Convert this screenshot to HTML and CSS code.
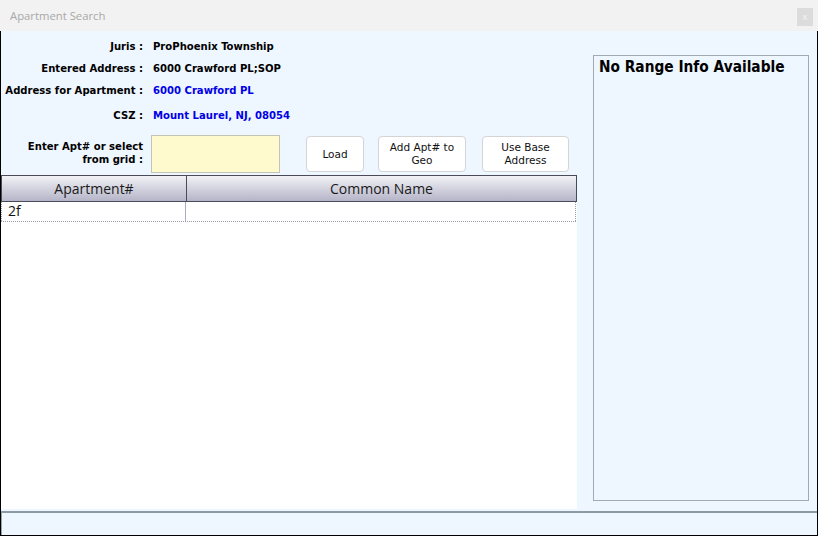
FILE: index.html
```html
<!DOCTYPE html>
<html>
<head>
<meta charset="utf-8">
<link rel="stylesheet" href="styles.css">
</head>
<body>
<div class="titlebar">
  <span class="title">Apartment Search</span>
  <span class="close">x</span>
</div>
<div class="window">
  <div class="main">
    <div class="left">
      <div class="form">
        <div class="row r1"><span class="lbl">Juris :</span><span class="val">ProPhoenix Township</span></div>
        <div class="row"><span class="lbl">Entered Address :</span><span class="val">6000 Crawford PL;SOP</span></div>
        <div class="row"><span class="lbl">Address for Apartment :</span><span class="val blue">6000 Crawford PL</span></div>
        <div class="row r4"><span class="lbl">CSZ :</span><span class="val blue">Mount Laurel, NJ, 08054</span></div>
        <div class="row r5">
          <span class="lbl two">Enter Apt# or select<br>from grid :</span>
          <input class="apt" type="text">
          <button class="btn b-load">Load</button>
          <button class="btn b-add">Add Apt# to<br>Geo</button>
          <button class="btn b-use">Use Base<br>Address</button>
        </div>
      </div>
      <div class="grid">
        <div class="ghead">
          <div class="c1">Apartment#</div>
          <div class="c2">Common Name</div>
        </div>
        <div class="grow">
          <div class="c1">2f</div>
          <div class="c2"></div>
        </div>
      </div>
    </div>
    <div class="right">
      <div class="panel">
        <div class="ptitle">No Range Info Available</div>
      </div>
    </div>
  </div>
  <div class="status"></div>
</div>
</body>
</html>
```

FILE: styles.css
```css
* { box-sizing: border-box; }
html, body { margin: 0; padding: 0; }
body { width: 818px; height: 536px; background: #eef6ff; font-family: "DejaVu Sans Condensed", "Liberation Sans", sans-serif; overflow: hidden; }

.titlebar { height: 31px; background: #f2f2f2; display: flex; align-items: center; justify-content: space-between; padding: 0 5px 0 10px; }
.title { font-family: "Open Sans", "Noto Sans", sans-serif; font-size: 11.3px; color: #a8a8a8; }
.close { width: 16px; height: 18px; background: #dcdcdc; color: #f4f4f4; font-size: 9px; display: flex; align-items: center; justify-content: center; margin-top: 3px; }

.window { height: 505px; border-left: 1px solid #000; border-right: 1px solid #000; border-bottom: 1px solid #000; display: flex; flex-direction: column; }
.main { flex: 1; display: flex; }
.left { width: 576px; display: flex; flex-direction: column; }

.form { padding-top: 4px; height: 145px; font-size: 11.2px; font-weight: bold; }
.row { display: flex; align-items: center; height: 22px; }
.lbl { width: 142px; text-align: right; flex: none; color: #000; }
.val { margin-left: 10px; color: #000; }
.blue { color: #0000e6; }
.r4 { margin-top: 3px; }
.r5 { margin-top: 9px; height: 38px; align-items: center; }
.lbl.two { line-height: 13px; margin-top: -2px; }
.apt { width: 129px; height: 38px; margin: 0 0 0 8px; background: #fffacd; border: 1px solid #c4c4b4; padding: 0; }
.btn { height: 36px; background: #fff; border: 1px solid #d4d4d4; border-radius: 4px; font-family: "DejaVu Sans", sans-serif; font-size: 10.5px; font-weight: normal; color: #111; line-height: 13px; padding: 0; }
.b-load { width: 58px; margin-left: 26px; }
.b-add { width: 88px; margin-left: 14px; }
.b-use { width: 87px; margin-left: 16px; }

.grid { flex: 1; background: #fff; display: flex; flex-direction: column; margin-top: -1px; }
.ghead { display: flex; height: 27px; border: 1px solid #4a4a58; background: linear-gradient(#f2f2f6, #b4b4c8); font-family: "Open Sans", "Noto Sans", sans-serif; font-size: 14px; color: #1a1a1a; }
.ghead .c1 { width: 185px; border-right: 1px solid #4a4a58; display: flex; align-items: center; justify-content: center; }
.ghead .c2 { flex: 1; display: flex; align-items: center; justify-content: center; }
.grow { display: flex; height: 20px; font-family: "Open Sans", "Noto Sans", sans-serif; font-size: 14px; color: #111; border-bottom: 1px dotted #9a9aa8; margin-right: 1px; }
.grow .c1 { width: 185px; padding-left: 6px; border-right: 1px solid #b0a8c8; border-left: 1px dotted #9a9aa8; line-height: 18px; }
.grow .c2 { flex: 1; border-right: 1px dotted #9a9aa8; }

.right { flex: 1; padding: 24px 8px 8px 16px; display: flex; }
.panel { flex: 1; border: 1px solid #a4a8b0; padding: 2px 5px; }
.ptitle { font-size: 15.3px; font-weight: bold; color: #000; }

.status { height: 24px; border-top: 2px solid #8c9aa6; border-left: 1px solid #9aa4ae; margin-top: 2px; }
```
